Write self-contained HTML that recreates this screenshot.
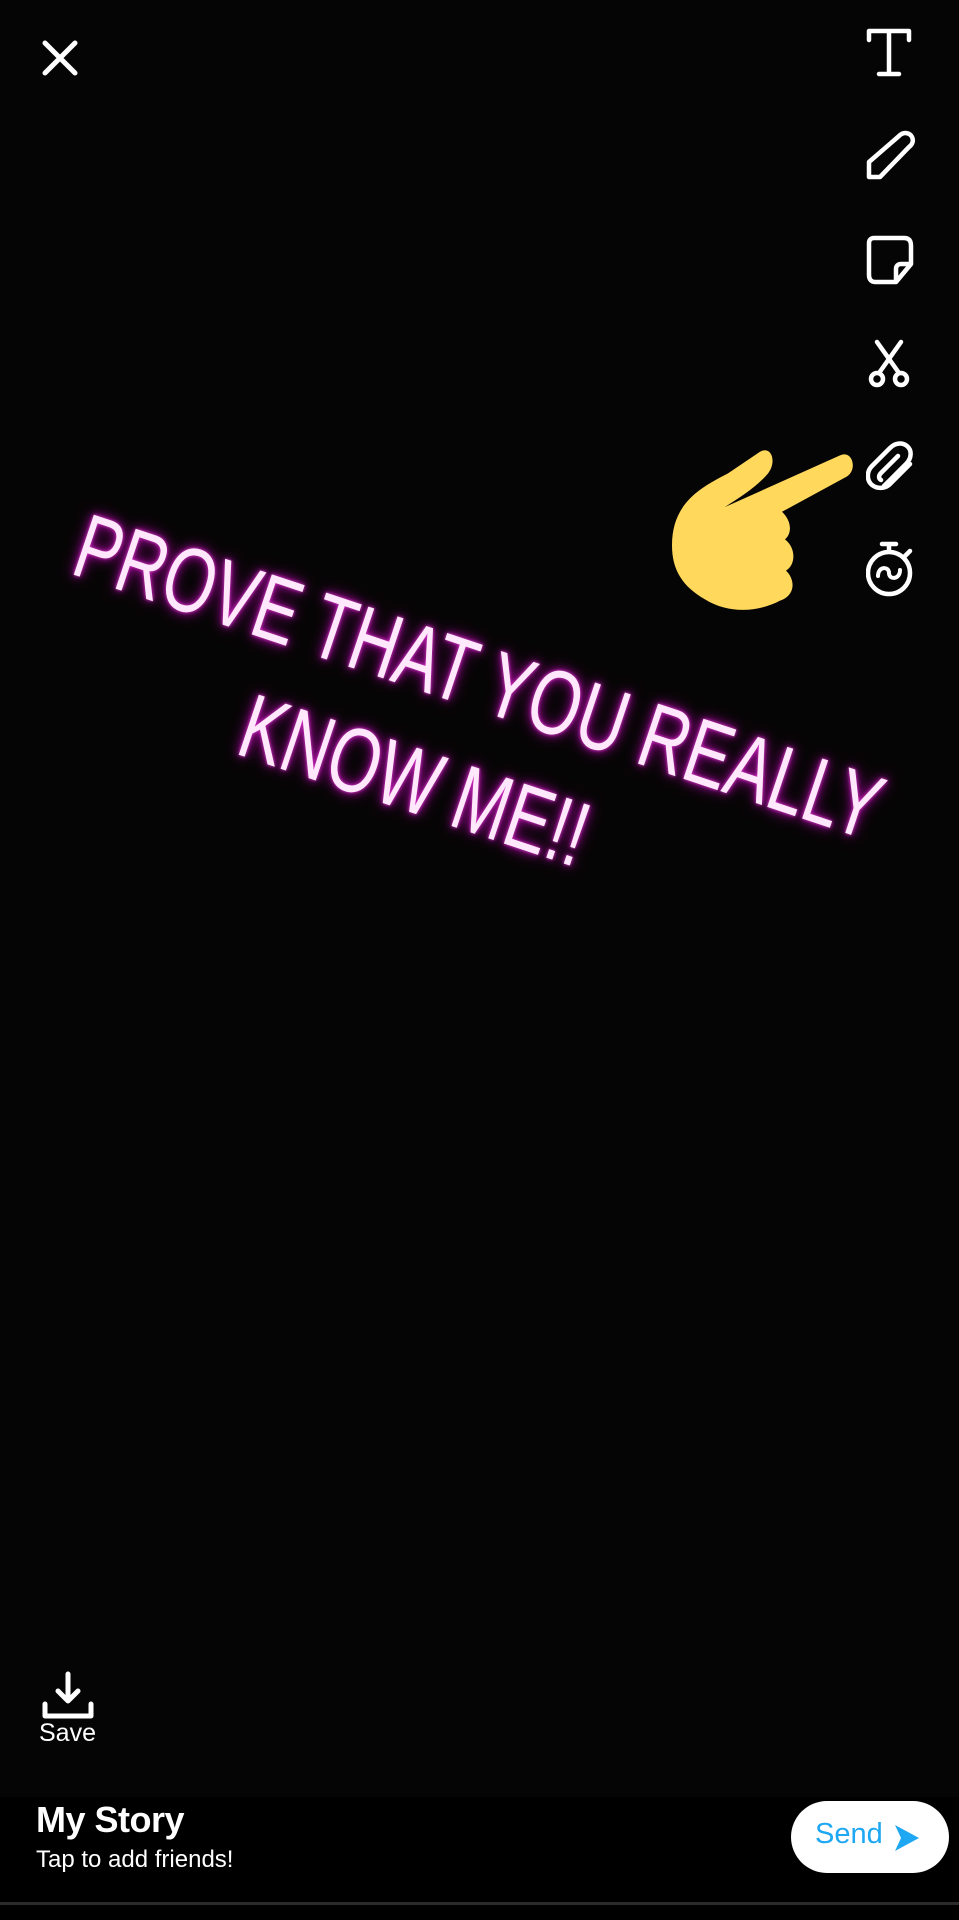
<!DOCTYPE html>
<html><head><meta charset="utf-8"><style>
html,body{margin:0;padding:0;}
body{width:959px;height:1920px;background:#060505;position:relative;overflow:hidden;font-family:"Liberation Sans",sans-serif;}
.ln{position:absolute;transform-origin:0 0;white-space:nowrap;font-size:92px;line-height:1;color:#ffe8fb;
text-shadow:0 0 4px #e040d0,0 0 10px #b010a8,0 0 18px #900088;}
.ln span{display:inline-block;transform:scaleX(0.72);transform-origin:0 0;}
svg{position:absolute;}
</style></head><body>
<!-- close -->
<svg style="left:40px;top:38px" width="40" height="40" viewBox="0 0 40 40"><path d="M5 5L35 35M35 5L5 35" stroke="#fff" stroke-width="5" stroke-linecap="round"/></svg>
<!-- right icons -->
<svg style="left:866px;top:0" width="50" height="620" viewBox="0 0 50 620" fill="none" stroke="#fff" stroke-width="4.5" stroke-linejoin="round" stroke-linecap="round">
<!-- T -->
<path d="M3 31H43V40M3 31V40M23 31V74M13 74H33"/>
<!-- pencil -->
<path d="M3 177L3 162L33 136C38 131 44 133 46 137C48 141 46 145 43 147L14 177Z"/>
<!-- sticker -->
<path d="M8 238H38C43 238 45 241 45 246V264L30 282H9C5 282 3 279 3 275V243C3 240 5 238 8 238Z M45 264H35C32 264 30 266 30 269V282"/>
<!-- scissors -->
<path d="M11 342L33 373M35 342L13 373"/>
<circle cx="11" cy="379" r="6"/><circle cx="35" cy="379" r="6"/>
<!-- clip -->
<path d="M18 486L40 464C46 458 46 450 41 446C36 442 29 443 24 448L6 466C0 472 1 481 6 485C11 489 19 489 24 484L44 464M32 456L15 473C12 476 13 479 15 480"/>
<!-- timer -->
<circle cx="23" cy="573" r="21"/>
<path d="M16 544H30M23 544V551M39 556L44 551"/>
<path d="M12 576C12 566 23 566 23 573C23 580 34 580 34 570" stroke-width="4"/>
</svg>
<!-- hand -->
<svg style="left:0;top:0" width="959" height="700" viewBox="0 0 959 700">
<g transform="translate(0,447) scale(1,1.2) translate(0,-378)">
<path fill="#ffd85c" d="M672 460C672 425 700 412 728 400L760 382C772 376 778 392 766 402C755 412 740 420 725 428L840 385C853 380 858 398 846 403L782 432C792 440 792 450 785 455C796 462 796 476 786 481C796 489 795 502 780 506C760 515 730 518 705 505C682 494 672 480 672 460Z"/>
</g>
</svg>
<!-- neon text -->
<div class="ln" style="left:93px;top:500px;transform:rotate(18.5deg)"><span>PROVE THAT YOU REALLY</span></div>
<div class="ln" style="left:258px;top:680px;transform:rotate(18.5deg)"><span>KNOW ME!!</span></div>
<!-- save -->
<svg style="left:40px;top:1670px" width="56" height="56" viewBox="0 0 56 56" fill="none" stroke="#fff" stroke-width="5" stroke-linecap="round" stroke-linejoin="round">
<path d="M28 4V30M18 21L28 31L38 21"/><path d="M5 34V46H51V34"/>
</svg>
<div style="position:absolute;left:39px;top:1719px;color:#fff;font-size:25px;">Save</div>
<!-- bottom bar -->
<div style="position:absolute;left:0;top:1797px;width:959px;height:123px;background:#000;"></div>
<div style="position:absolute;left:36px;top:1799px;color:#fff;font-size:36px;font-weight:bold;letter-spacing:-0.5px;">My Story</div>
<div style="position:absolute;left:36px;top:1846px;color:#fff;font-size:24px;">Tap to add friends!</div>
<div style="position:absolute;left:791px;top:1801px;width:158px;height:72px;border-radius:36px;background:#fff;"></div>
<div style="position:absolute;left:815px;top:1818px;color:#1ea7f2;font-size:29px;">Send</div>
<svg style="left:892px;top:1824px" width="30" height="28" viewBox="0 0 30 28"><path d="M3 1L27 14L3 27L9 14Z" fill="#1ea7f2"/></svg>
<div style="position:absolute;left:0;top:1902px;width:959px;height:3px;background:#2a2a2a;"></div>
</body></html>
